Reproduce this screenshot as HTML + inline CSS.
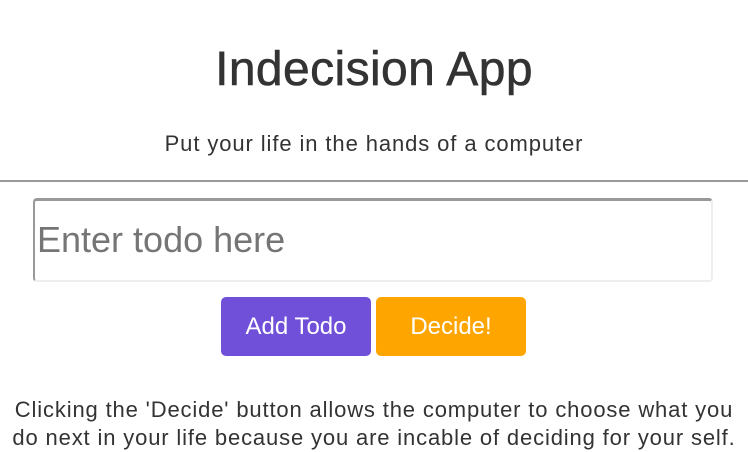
<!DOCTYPE html>
<html><head><style>
body{margin:0;width:748px;height:450px;overflow:hidden;background:#fff;font-family:"Liberation Sans",sans-serif;color:#333;}
h1{position:absolute;top:40px;left:0;width:748px;text-align:center;margin:0;font-size:48px;font-weight:normal;line-height:60px;letter-spacing:0.4px;-webkit-text-stroke:0.6px #333;}
.sub{position:absolute;top:130px;left:0;width:748px;text-align:center;font-size:22px;line-height:28px;letter-spacing:0.9px;}
.hr{position:absolute;top:180px;left:0;width:748px;height:2px;background:#999;}
.inp{position:absolute;left:33px;top:198px;width:676px;height:79px;border:2px solid #eee;border-top:3px solid #999;border-left:2px solid #999;border-radius:4px;}
.inp span{position:absolute;left:2px;top:18px;font-size:36px;color:#757575;}
.b{position:absolute;top:297px;width:150px;height:59px;border-radius:5px;color:#fff;font-size:24px;text-align:center;line-height:59px;}
.p{position:absolute;top:396px;left:0;width:748px;text-align:center;font-size:22px;line-height:28px;letter-spacing:0.85px;white-space:nowrap;}
</style></head><body>
<h1>Indecision App</h1>
<div class="sub">Put your life in the hands of a computer</div>
<div class="hr"></div>
<div class="inp"><span>Enter todo here</span></div>
<div class="b" style="left:221px;background:#704fd9">Add Todo</div>
<div class="b" style="left:376px;background:#ffa500">Decide!</div>
<div class="p">Clicking the 'Decide' button allows the computer to choose what you<br>do next in your life because you are incable of deciding for your self.</div>
</body></html>
